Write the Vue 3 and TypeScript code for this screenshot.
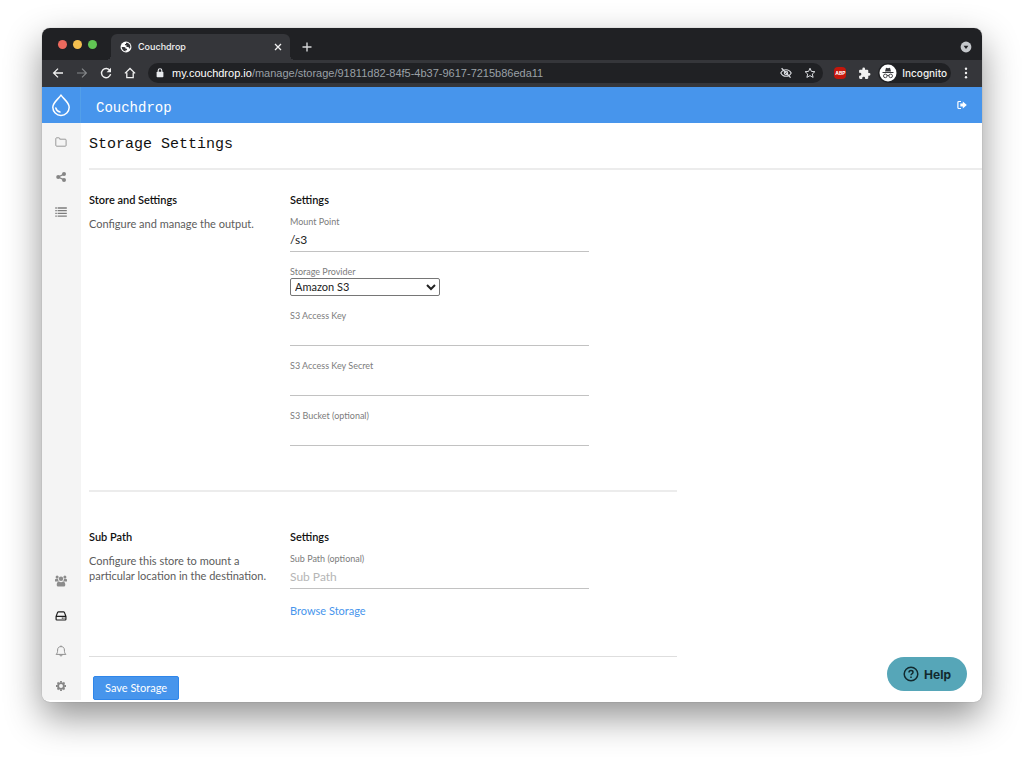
<script setup lang="ts">
import { reactive } from 'vue'

interface TextField {
  id: 'accessKey' | 'accessSecret' | 'bucket'
  label: string
}

const keyFields: TextField[] = [
  { id: 'accessKey', label: 'S3 Access Key' },
  { id: 'accessSecret', label: 'S3 Access Key Secret' },
  { id: 'bucket', label: 'S3 Bucket (optional)' },
]

const form = reactive({
  mountPoint: '/s3',
  provider: 'Amazon S3',
  accessKey: '',
  accessSecret: '',
  bucket: '',
  subPath: '',
})
</script>

<template>
  <div class="desktop">
    <div class="window">
      <div class="tab-strip">
        <div class="lights">
          <span class="light red"></span>
          <span class="light yellow"></span>
          <span class="light green"></span>
        </div>
        <div class="tab">
          <svg class="globe" viewBox="0 0 16 16" width="12" height="12">
            <circle cx="8" cy="8" r="7.3" fill="#fff" />
            <path d="M2.2 8 H5.600 Q7.600 8.400 7.600 10.400 H9.400 V12.200 H7.400 V14 Q3 13.200 2.200 8Z M8 2.200 H9.800 Q13.600 3.600 13.900 8 Q13.600 9.400 12.800 10.200 Q11.600 9.800 11.400 8 H8.600 V5.600 H6.600 V4 H8Z" fill="#35363a" />
          </svg>
          <span class="tab-title">Couchdrop</span>
          <button class="plain tab-close" aria-label="Close tab">
            <svg viewBox="0 0 8 8" width="8" height="8"><path d="M1 1 L7 7 M7 1 L1 7" stroke="#f1f1f1" stroke-width="1.3" /></svg>
          </button>
        </div>
        <button class="plain new-tab" aria-label="New tab">
          <svg viewBox="0 0 10 10" width="10" height="10"><path d="M5 0.5 V9.5 M0.5 5 H9.5" stroke="#d5d6d8" stroke-width="1.4" /></svg>
        </button>
        <button class="plain tab-search" aria-label="Search tabs">
          <svg viewBox="0 0 12 12" width="12" height="12"><circle cx="6" cy="6" r="5.4" fill="#c4c7cb" /><path d="M3.6 4.7 H8.4 L6 7.9Z" fill="#202124" /></svg>
        </button>
      </div>

      <div class="toolbar">
        <button class="plain tool" aria-label="Back">
          <svg viewBox="0 0 12 12" width="12" height="12" fill="none" stroke="#f1f1f1" stroke-width="1.3"><path d="M11 6 H1.8 M6 1.6 L1.6 6 L6 10.4" /></svg>
        </button>
        <button class="plain tool" aria-label="Forward">
          <svg viewBox="0 0 12 12" width="12" height="12" fill="none" stroke="#85878a" stroke-width="1.2"><path d="M1 6 H10.2 M6 1.6 L10.4 6 L6 10.4" /></svg>
        </button>
        <button class="plain tool" aria-label="Reload">
          <svg viewBox="0 0 12 12" width="12" height="12"><path d="M10 3.6 A4.6 4.6 0 1 0 10.6 7.2" fill="none" stroke="#f1f1f1" stroke-width="1.4" /><path d="M11 0.8 V5.2 H6.6Z" fill="#f1f1f1" /></svg>
        </button>
        <button class="plain tool" aria-label="Home">
          <svg viewBox="0 0 12 12" width="12" height="12" fill="none" stroke="#f1f1f1" stroke-width="1.3"><path d="M0.9 6.4 L6 1.5 L11.1 6.4 M2.8 5.4 V10.6 H9.2 V5.4" /></svg>
        </button>
        <div class="address">
          <svg class="lock" viewBox="0 0 8 10" width="8" height="10"><rect x="0.6" y="3.8" width="6.8" height="5.4" rx="0.8" fill="#e8eaed" /><path d="M2.2 4 V2.6 A1.8 1.8 0 0 1 5.8 2.6 V4" fill="none" stroke="#e8eaed" stroke-width="1.1" /></svg>
          <span class="url"><span class="host">my.couchdrop.io</span>/manage/storage/91811d82-84f5-4b37-9617-7215b86eda11</span>
          <svg viewBox="0 0 12 12" width="12" height="12" fill="none" stroke="#dadce0" stroke-width="1.1"><path d="M0.8 6 C3 1.6 9 1.6 11.2 6 C9 10.4 3 10.4 0.8 6Z" /><circle cx="6" cy="6" r="1.7" /><path d="M1.6 1.2 L10.6 10.6" stroke-width="1.3" /></svg>
          <svg class="star" viewBox="0 0 12 12" width="12" height="12" fill="none" stroke="#dadce0" stroke-width="1"><path d="M6 1.2 L7.4 4.4 L10.9 4.7 L8.3 7 L9.1 10.4 L6 8.6 L2.9 10.4 L3.7 7 L1.1 4.7 L4.6 4.4Z" /></svg>
        </div>
        <span class="abp">ABP</span>
        <svg class="puzzle" viewBox="0 0 24 24" width="13" height="13"><path fill="#f1f1f1" d="M20.5 11H19V7a2 2 0 0 0-2-2h-4V3.500a2.500 2.500 0 0 0-5 0V5H4a2 2 0 0 0-2 2v3.800h1.500a2.700 2.700 0 0 1 0 5.400H2V20a2 2 0 0 0 2 2h3.800v-1.500a2.700 2.700 0 0 1 5.400 0V22H17a2 2 0 0 0 2-2v-4h1.500a2.500 2.500 0 0 0 0-5z" /></svg>
        <div class="incognito">
          <svg viewBox="0 0 18 18" width="18" height="18">
            <circle cx="9" cy="9" r="8.500" fill="#fff" />
            <path d="M6 7.600 L7 3.700 L9 4.200 L11 3.700 L12 7.600Z M3.500 8.100 H14.500 V9 H3.500Z" fill="#35363a" />
            <g fill="none" stroke="#35363a" stroke-width="0.9"><circle cx="6.300" cy="11.900" r="1.800" /><circle cx="11.700" cy="11.900" r="1.800" /><path d="M8 11.600 Q9 10.900 10 11.600" /></g>
          </svg>
          <span>Incognito</span>
        </div>
        <button class="plain menu" aria-label="Menu">
          <svg viewBox="0 0 4 12" width="4" height="12" fill="#f1f1f1"><circle cx="2" cy="1.800" r="1.200" /><circle cx="2" cy="6" r="1.200" /><circle cx="2" cy="10.200" r="1.200" /></svg>
        </button>
      </div>

      <header class="app-bar">
        <a class="logo" href="#" aria-label="Home">
          <svg viewBox="0 0 20 24" width="20" height="24" fill="none" stroke="#fff" stroke-width="1.500" stroke-linecap="round" stroke-linejoin="round"><path d="M10 2 C8 5.500 1.800 9.500 1.800 14.200 A8.200 8.200 0 0 0 18.200 14.200 C18.200 9.500 12 5.500 10 2Z" /><path d="M4.800 15 C5.300 17 6.800 18.600 9 19" /></svg>
        </a>
        <span class="brand">Couchdrop</span>
        <button class="plain logout" aria-label="Log out">
          <svg viewBox="0 0 10 10" width="10" height="10"><path d="M4 1.500 H2 Q0.900 1.500 0.900 2.600 V7.400 Q0.900 8.500 2 8.500 H4" fill="none" stroke="#fff" stroke-width="1.200" /><path d="M3.300 3.600 H5.800 V1.500 L9.800 5 L5.800 8.500 V6.400 H3.300Z" fill="#fff" /></svg>
        </button>
      </header>

      <div class="body">
        <nav class="sidebar">
          <a href="#" aria-label="Files">
            <svg viewBox="0 0 12 12" width="12" height="12" fill="none" stroke="#8e8e8e" stroke-width="0.900"><path d="M0.800 9.400 V2.600 Q0.800 1.800 1.600 1.800 H3.900 Q4.700 1.800 4.700 2.600 V3.200 H10.200 Q11.100 3.200 11.100 4.100 V9.400 Q11.100 10.200 10.200 10.200 H1.700 Q0.800 10.200 0.800 9.400Z" /></svg>
          </a>
          <a href="#" aria-label="Share">
            <svg viewBox="0 0 12 12" width="12" height="12" fill="#858585"><circle cx="3.200" cy="6" r="2" /><circle cx="9" cy="3.100" r="2" /><circle cx="9" cy="8.900" r="2" /><path d="M9 3.100 L3.200 6 L9 8.900" fill="none" stroke="#858585" stroke-width="1.200" /></svg>
          </a>
          <a href="#" aria-label="Activity">
            <svg viewBox="0 0 12 12" width="12" height="12" stroke="#7c7c7c" stroke-width="1.300"><path d="M0.300 2 H1.800 M2.600 2 H11.800 M0.300 4.700 H1.800 M2.600 4.700 H11.800 M0.300 7.400 H1.800 M2.600 7.400 H11.800 M0.300 10.100 H1.800 M2.600 10.100 H11.800" /></svg>
          </a>
          <a class="lower" href="#" aria-label="Users">
            <svg viewBox="0 0 14 12" width="14" height="12" fill="#8c8c8c"><circle cx="3.100" cy="1.900" r="1.500" /><circle cx="10.900" cy="1.900" r="1.500" /><circle cx="7" cy="3.700" r="2.200" /><path d="M1 6.500 V5 Q1 3.700 2.200 3.700 H4 Q4 5.400 5 6.300 L4 6.500Z M13 6.500 V5 Q13 3.700 11.800 3.700 H10 Q10 5.400 9 6.300 L10 6.500Z" /><path d="M2.700 10 Q2.700 6.500 5 6.500 Q7 7.800 9 6.500 Q11.300 6.500 11.300 10 Q11.300 11.600 9.800 11.600 H4.200 Q2.700 11.600 2.700 10Z" /></svg>
          </a>
          <a href="#" aria-label="Storage">
            <svg viewBox="0 0 12 12" width="12" height="12" fill="none" stroke="#1c1c1c" stroke-width="1.200"><path d="M1.100 6.400 L2.600 2.400 Q2.900 1.800 3.500 1.800 H8.500 Q9.100 1.800 9.400 2.400 L10.900 6.400 V9.200 Q10.900 10 10.100 10 H1.900 Q1.100 10 1.100 9.200Z M1.100 6.300 H10.900 M6.800 8.200 H7.800 M8.500 8.200 H9.500" /></svg>
          </a>
          <a href="#" aria-label="Notifications">
            <svg viewBox="0 0 12 12" width="12" height="12" fill="none" stroke="#858585" stroke-width="0.900"><path d="M6 0.500 V1.500 M1.100 9.400 C2.300 8.300 2.600 7.200 2.600 5 C2.600 2.800 3.900 1.600 6 1.600 C8.100 1.600 9.400 2.800 9.400 5 C9.400 7.200 9.700 8.300 10.900 9.400Z M4.700 9.600 Q4.900 11 6 11 Q7.100 11 7.300 9.600" /></svg>
          </a>
          <a href="#" aria-label="Preferences">
            <svg viewBox="0 0 12 12" width="12" height="12" fill="none" stroke="#858585"><circle cx="6" cy="6" r="2.900" stroke-width="1.900" /><path d="M6 1 V2.600 M6 9.400 V11 M1 6 H2.600 M9.400 6 H11 M2.500 2.500 L3.600 3.600 M8.400 8.400 L9.500 9.500 M9.500 2.500 L8.400 3.600 M3.600 8.400 L2.500 9.500" stroke-width="1.800" /></svg>
          </a>
        </nav>

        <main class="page">
          <h1>Storage Settings</h1>

          <form @submit.prevent>
            <section class="group store">
              <div>
                <h2>Store and Settings</h2>
                <p>Configure and manage the output.</p>
              </div>
              <div class="fields">
                <h2>Settings</h2>
                <div class="field">
                  <label for="mountPoint">Mount Point</label>
                  <input id="mountPoint" v-model="form.mountPoint" type="text" />
                </div>
                <div class="field">
                  <label for="provider">Storage Provider</label>
                  <select id="provider" v-model="form.provider">
                    <option>Amazon S3</option>
                  </select>
                </div>
                <div v-for="f in keyFields" :key="f.id" class="field">
                  <label :for="f.id">{{ f.label }}</label>
                  <input :id="f.id" v-model="form[f.id]" type="text" />
                </div>
              </div>
            </section>

            <section class="group sub">
              <div>
                <h2>Sub Path</h2>
                <p>Configure this store to mount a particular location in the destination.</p>
              </div>
              <div class="fields">
                <h2>Settings</h2>
                <div class="field">
                  <label for="subPath">Sub Path (optional)</label>
                  <input id="subPath" v-model="form.subPath" type="text" placeholder="Sub Path" />
                </div>
                <a class="browse" href="#">Browse Storage</a>
              </div>
            </section>

            <button class="save" type="submit">Save Storage</button>
          </form>
        </main>
      </div>

      <button class="help" type="button">
        <svg viewBox="0 0 16 16" width="16" height="16" fill="none" stroke="#12292e" stroke-width="1.500"><circle cx="8" cy="8" r="6.800" /><path d="M6 6.500 Q6 4.600 8 4.600 Q10 4.600 10 6.200 Q10 7.200 8.900 7.800 Q8 8.300 8 9.300" /><path d="M8 10.400 V11.900" /></svg>
        <span>Help</span>
      </button>
    </div>
  </div>
</template>

<style>
body {
  margin: 0;
  background: #fff;
}
</style>

<style scoped>
* {
  box-sizing: border-box;
}
svg {
  display: block;
  flex: none;
}
.desktop {
  min-height: 100vh;
  padding: 28px 42px 55px;
  display: flex;
  overflow: hidden;
  font-family: Lato, "Liberation Sans", sans-serif;
}
.window {
  position: relative;
  flex: 1;
  min-width: 0;
  display: flex;
  flex-direction: column;
  border-radius: 8px;
  overflow: hidden;
  background: #fff;
  box-shadow: 0 0 1px rgba(0, 0, 0, 0.4), 0 15px 36px rgba(0, 0, 0, 0.43);
}
.plain {
  padding: 0;
  border: 0;
  background: none;
  display: flex;
}
.tab-strip {
  display: flex;
  height: 32px;
  background: #202124;
  font-family: Inter, sans-serif;
}
.lights {
  display: flex;
  gap: 6px;
  padding: 12px 0 0 16px;
  width: 69px;
}
.light {
  width: 9px;
  height: 9px;
  border-radius: 50%;
}
.red { background: #ec6a5e; }
.yellow { background: #f4bf4f; }
.green { background: #61c554; }
.tab {
  position: relative;
  display: flex;
  align-items: center;
  width: 179px;
  margin-top: 6px;
  padding: 0 8px 1px 9px;
  border-radius: 6px 6px 0 0;
  background: #35363a;
}
.tab::before,
.tab::after {
  content: "";
  position: absolute;
  bottom: 0;
  width: 5px;
  height: 5px;
}
.tab::before {
  right: 100%;
  background: radial-gradient(circle at 0 0, transparent 5px, #35363a 5px);
}
.tab::after {
  left: 100%;
  background: radial-gradient(circle at 100% 0, transparent 5px, #35363a 5px);
}
.tab-title {
  flex: 1;
  margin-left: 6px;
  color: #f1f1f1;
  font-size: 9px;
  font-weight: 500;
}
.new-tab {
  align-self: center;
  margin: 5px 0 0 12px;
}
.tab-search {
  align-self: center;
  margin: 5px 10px 0 auto;
}
.toolbar {
  display: flex;
  align-items: center;
  height: 27px;
  padding: 0 0 1px 10px;
  background: #35363a;
  font-family: Inter, sans-serif;
}
.tool {
  margin-right: 12px;
}
.address {
  display: flex;
  align-items: center;
  flex: 1;
  min-width: 0;
  height: 20px;
  padding: 0 7px 0 8px;
  border-radius: 10px;
  background: #202124;
}
.url {
  flex: 1;
  min-width: 0;
  margin-left: 8px;
  overflow: hidden;
  white-space: nowrap;
  color: #9aa0a6;
  font-family: "Liberation Sans", Arial, sans-serif;
  font-size: 11px;
}
.host {
  color: #fff;
}
.star {
  margin-left: 12px;
}
.abp {
  width: 12px;
  height: 12px;
  margin-left: 11px;
  border-radius: 4px;
  background: #c4170c;
  color: #fff;
  font-size: 5px;
  font-weight: 700;
  line-height: 12px;
  text-align: center;
}
.puzzle {
  margin: 0 7px 0 12px;
}
.incognito {
  display: flex;
  align-items: center;
  gap: 5px;
  height: 20px;
  padding: 0 4px 0 1px;
  border-radius: 10px;
  background: #202124;
  color: #f1f1f1;
  font-size: 10px;
  font-weight: 500;
}
.menu {
  margin: 0 14px 0 13px;
}
.app-bar {
  display: flex;
  align-items: center;
  height: 36px;
  background: #4795ec;
}
.logo {
  display: flex;
  align-items: center;
  justify-content: center;
  width: 39px;
  height: 100%;
  border-right: 1px solid #529fe9;
}
.brand {
  margin: 6px 0 0 15px;
  color: #fff;
  font: 14px "Liberation Mono", monospace;
}
.logout {
  margin: 0 15px 0 auto;
}
.body {
  flex: 1;
  display: flex;
  padding-bottom: 2px;
}
.sidebar {
  display: flex;
  flex-direction: column;
  gap: 6px;
  width: 39px;
  padding: 4px 1px 0 0;
  background: #f4f4f4;
}
.sidebar a {
  display: flex;
  align-items: center;
  justify-content: center;
  height: 29px;
}
.sidebar .lower {
  margin-top: auto;
}
.page {
  flex: 1;
  min-width: 0;
  padding-left: 8px;
}
h1 {
  margin: 0;
  height: 47px;
  border-bottom: 2px solid #ececec;
  color: #111;
  font: 15px/43px "Liberation Mono", monospace;
}
.group {
  display: grid;
  grid-template-columns: 201px minmax(0, 299px);
  max-width: 588px;
}
.store {
  padding: 20px 0 44px;
  border-bottom: 2px solid #ececec;
}
.sub {
  padding: 35px 0 37px;
  border-bottom: 1px solid #dedede;
}
h2 {
  margin: 0 0 6px;
  color: #111;
  font-size: 11px;
  font-weight: 600;
  line-height: 20px;
}
p {
  margin: 0;
  max-width: 180px;
  color: #5c5c5c;
  font-size: 11px;
  line-height: 15px;
}
.field {
  display: flex;
  flex-direction: column;
  align-items: flex-start;
  margin-bottom: 14px;
}
.field:last-child {
  margin-bottom: 0;
}
label {
  color: #7c7c7c;
  font-size: 9px;
  line-height: 12px;
}
input {
  width: 100%;
  height: 24px;
  padding: 0;
  border: 0;
  border-bottom: 1px solid #c2c2c2;
  background: transparent;
  color: #222;
  font: 12px Lato, sans-serif;
  outline: none;
}
input::placeholder {
  color: #b5b5b5;
}
select {
  width: 150px;
  height: 18px;
  padding: 0 0 1px;
  border: 1px solid #767676;
  border-radius: 2px;
  background-color: #fff;
  color: #222;
  font: 11px Lato, sans-serif;
}
.browse {
  display: block;
  color: #4795ec;
  font-size: 11px;
  line-height: 16px;
  text-decoration: none;
}
.save {
  display: block;
  height: 24px;
  margin: 19px 0 0 4px;
  padding: 0 11px 2px;
  border: 1px solid #2f86ea;
  border-radius: 2px;
  background: #4795ec;
  color: #fff;
  font: 11px Lato, sans-serif;
}
.help {
  position: absolute;
  right: 15px;
  bottom: 11px;
  display: flex;
  align-items: center;
  gap: 5px;
  height: 34px;
  padding: 0 16px;
  border: 0;
  border-radius: 17px;
  background: #56a6b8;
  color: #12292e;
  font: 700 12px Inter, sans-serif;
}
</style>
